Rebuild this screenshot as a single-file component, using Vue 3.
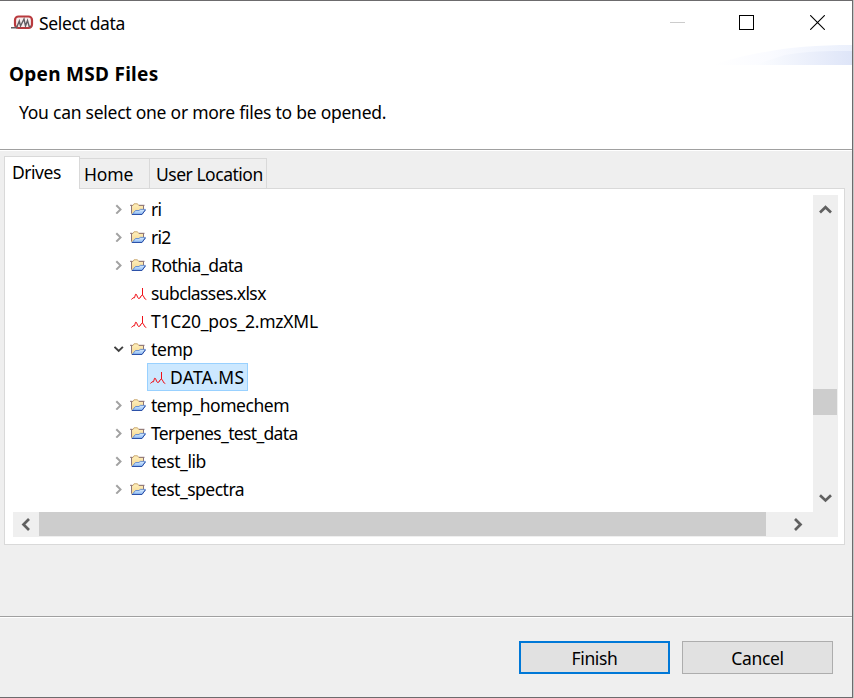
<script setup>
const rows = [
  { name: 'ri', kind: 'folder', spacing: -0.7 },
  { name: 'ri2', kind: 'folder', spacing: -0.7 },
  { name: 'Rothia_data', kind: 'folder', spacing: -0.5 },
  { name: 'subclasses.xlsx', kind: 'file', spacing: -0.6 },
  { name: 'T1C20_pos_2.mzXML', kind: 'file', spacing: -0.22 },
  { name: 'temp', kind: 'folder', open: true, spacing: -0.4 },
  { name: 'DATA.MS', kind: 'file', selected: true, spacing: 0.3 },
  { name: 'temp_homechem', kind: 'folder', spacing: -0.47 },
  { name: 'Terpenes_test_data', kind: 'folder', spacing: -0.66 },
  { name: 'test_lib', kind: 'folder', spacing: -0.45 },
  { name: 'test_spectra', kind: 'folder', spacing: -0.5 },
]
</script>

<template>
  <div class="stage">
    <div class="window">
      <header class="header">
        <div class="titlebar">
          <svg class="logo" width="24" height="18" viewBox="0 0 24 18">
            <rect x="4" y="2.5" width="17" height="11.5" rx="3.5" fill="#f7eeee" stroke="#b93a3e" stroke-width="2.2" />
            <path d="M0 13.7H5.5L8.3 7L9.5 12L13 5L14.5 12L16.5 6.5L18.2 12.5H20" fill="none" stroke="#625d62" stroke-width="1.4" />
          </svg>
          <span class="title">Select data</span>
          <div class="controls">
            <svg width="15" height="15" viewBox="0 0 15 15"><path d="M0 7.5H15" stroke="#ccc" /></svg>
            <svg width="15" height="15" viewBox="0 0 15 15"><rect x=".5" y=".5" width="14" height="14" fill="none" stroke="#000" /></svg>
            <svg class="close" width="15" height="15" viewBox="0 0 15 15"><path d="M.2 .2L14.8 14.8M14.8 .2L.2 14.8" stroke="#000" stroke-width="1.1" /></svg>
          </div>
        </div>
        <svg class="swoosh" width="140" height="20" viewBox="0 0 140 20">
          <defs>
            <linearGradient id="fade"><stop offset="0" stop-color="#fff" /><stop offset=".4" stop-color="#fafbff" /><stop offset="1" stop-color="#ebf0fc" /></linearGradient>
            <linearGradient id="fade2"><stop offset="0" stop-color="#fcfdff" /><stop offset="1" stop-color="#dee5f8" /></linearGradient>
          </defs>
          <path d="M0 20C45 6 85 0 140 0V20Z" fill="url(#fade)" />
          <path d="M42 20L73 10C95 6 115 6 140 6V20Z" fill="url(#fade2)" />
        </svg>
        <h1>Open MSD Files</h1>
        <p>You can select one or more files to be opened.</p>
      </header>

      <main>
        <nav class="tabs">
          <div class="tab active"><span class="t-drives">Drives</span></div>
          <div class="tab home"><span class="t-home">Home</span></div>
          <div class="tab location"><span class="t-loc">User Location</span></div>
        </nav>
        <section class="panel">
          <div class="view">
            <ul class="tree">
              <li v-for="row in rows" :key="row.name" :class="{ child: row.selected }">
                <span class="twisty">
                  <svg v-if="row.open" width="10" height="10" viewBox="0 0 10 10"><path d="M.5 2.8L4.7 7L8.9 2.8" fill="none" stroke="#404040" stroke-width="1.9" /></svg>
                  <svg v-else-if="row.kind === 'folder'" width="10" height="10" viewBox="0 0 10 10"><path d="M2.3 1.2L6.5 5.4L2.3 9.6" fill="none" stroke="#a2a2a2" stroke-width="2" /></svg>
                </span>
                <span class="entry" :class="{ selected: row.selected }">
                  <svg v-if="row.kind === 'folder'" class="icon" width="16" height="14" viewBox="0 0 16 14">
                    <defs>
                      <linearGradient id="paper" x2="0" y2="1"><stop stop-color="#fff0bd" /><stop offset="1" stop-color="#f5d68f" /></linearGradient>
                      <linearGradient id="flap" x2="0" y2="1"><stop stop-color="#d9ecff" /><stop offset="1" stop-color="#8dbaf4" /></linearGradient>
                    </defs>
                    <path d="M1.5 12V3.5H3L4 1.8H7.5L8.7 3.5H13.5V8" fill="url(#paper)" stroke="#cba972" />
                    <path d="M0 3.3H2.5M1.5 11V3.5M9 3.3H14.5M13.5 3.3V7" fill="none" stroke="#8b7479" />
                    <path d="M2.3 12.3L5.5 8.5H9L10.2 7.4H15.5L12 12.3Z" fill="url(#flap)" stroke="#5c88cf" stroke-width=".9" />
                    <path d="M1.8 12.5H12L15.4 8" fill="none" stroke="#2c51a8" />
                  </svg>
                  <svg v-else class="icon file" width="16" height="14" viewBox="0 0 16 14">
                    <path d="M.5 12.5L2 10.8H3.5L4.5 7.3L5.5 7.5L6.5 10L7.5 11.5L9 11L10 9L11.5 8V1V8L13 10L13.5 11.5L15.3 12.5" fill="none" stroke="#f01018" />
                  </svg>
                  <span :style="{ letterSpacing: row.spacing + 'px' }">{{ row.name }}</span>
                </span>
              </li>
            </ul>
            <div class="vbar">
              <svg width="13" height="10" viewBox="0 0 13 10"><path d="M1 7.4L6.5 2.2L12 7.4" /></svg>
              <div class="vthumb"></div>
              <svg width="13" height="10" viewBox="0 0 13 10"><path d="M1 2.3L6.5 7.5L12 2.3" /></svg>
            </div>
          </div>
          <div class="hbar">
            <svg width="10" height="13" viewBox="0 0 10 13"><path d="M8 1L2.5 6.5L8 12" /></svg>
            <div class="hthumb"></div>
            <svg width="10" height="13" viewBox="0 0 10 13"><path d="M2 1L7.5 6.5L2 12" /></svg>
          </div>
        </section>
      </main>

      <footer>
        <button class="primary">Finish</button>
        <button>Cancel</button>
      </footer>
    </div>
  </div>
</template>

<style>
body { margin: 0; overflow: hidden; }
</style>

<style scoped>
* { box-sizing: border-box; }
svg { display: block; flex: none; }
.stage { width: 854px; height: 698px; background: #c6c6c6; font: 17.5px/24px "Noto Sans", sans-serif; color: #000; white-space: nowrap; }
.window { width: 853px; height: 698px; display: flex; flex-direction: column; background: #efefef; border: solid #6c6b6d; border-width: 1px 1px 1px 0; }
.header { position: relative; height: 149px; background: #fff; border-bottom: 1px solid #a0a0a0; }
.titlebar { height: 44px; display: flex; align-items: center; padding-left: 11px; }
.logo { margin-top: -1px; }
.title { margin-left: 4px; letter-spacing: -.35px; }
.controls { display: flex; gap: 54px; margin: -1px 27px 0 auto; }
.close { margin-left: 2px; }
.swoosh { position: absolute; right: 0; top: 44px; }
h1 { margin: 17px 0 0 9px; font-size: 19px; line-height: 24px; letter-spacing: .28px; }
p { margin: 14px 0 0 19px; letter-spacing: -.25px; }
main { height: 466px; border-top: 1px solid #fff; padding: 5px 0 0 4px; }
.tabs { display: flex; align-items: flex-end; height: 33px; }
.tab { height: 31px; border: 1px solid #d9d9d9; border-left: 0; padding: 3px 0 0 4px; }
.tab.active { position: relative; width: 76px; height: 33px; background: #fff; border-left: 1px solid #d9d9d9; border-bottom: 0; padding: 3px 0 0 7px; }
.tab.location { width: 117px; padding-left: 6px; }
.home { width: 70px; }
.t-drives, .t-loc { letter-spacing: -.48px; }
.t-home { letter-spacing: -.1px; }
.panel { width: 841px; height: 357px; margin-top: -1px; background: #fff; border: 1px solid #d9d9d9; padding: 6px 6px 0 8px; }
.view { display: flex; justify-content: space-between; height: 317px; }
.tree { list-style: none; margin: 0; padding: 0 0 0 100px; }
li { height: 28px; display: flex; align-items: center; }
li.child { padding-left: 16px; }
.twisty { width: 14px; padding-left: 1px; }
.entry { display: flex; align-items: center; gap: 5px; height: 28px; padding-left: 3px; }
.icon.file { margin: 1px -1px 0 1px; }
.child .entry { border: 1px solid #99d1ff; background: #cce8ff; padding-left: 1px; width: 101px; margin-left: 4px; gap: 5px; }
.vbar { width: 25px; background: #efefef; display: flex; flex-direction: column; align-items: center; padding-top: 10px; }
.vthumb { width: 24px; height: 26px; margin: 174px 1px 78px 0; background: #cdcdcd; }
.hbar { height: 25px; display: flex; align-items: center; background: #efefef; padding-left: 8px; }
.vbar path, .hbar path { fill: none; stroke: #606060; stroke-width: 2.7; }
.hthumb { width: 727px; height: 24px; margin: 0 27px 1px 8px; background: #cdcdcd; }
footer { flex: 1; border-top: 1px solid #a0a0a0; box-shadow: inset 0 1px #fff; display: flex; gap: 12px; justify-content: flex-end; padding: 24px 19px 0 0; }
button { width: 151px; height: 33px; padding: 1px 0 0; border: 1px solid #adadad; background: #e1e1e1; font: inherit; color: inherit; letter-spacing: -.35px; }
button.primary { border: 2px solid #0078d7; }
</style>
